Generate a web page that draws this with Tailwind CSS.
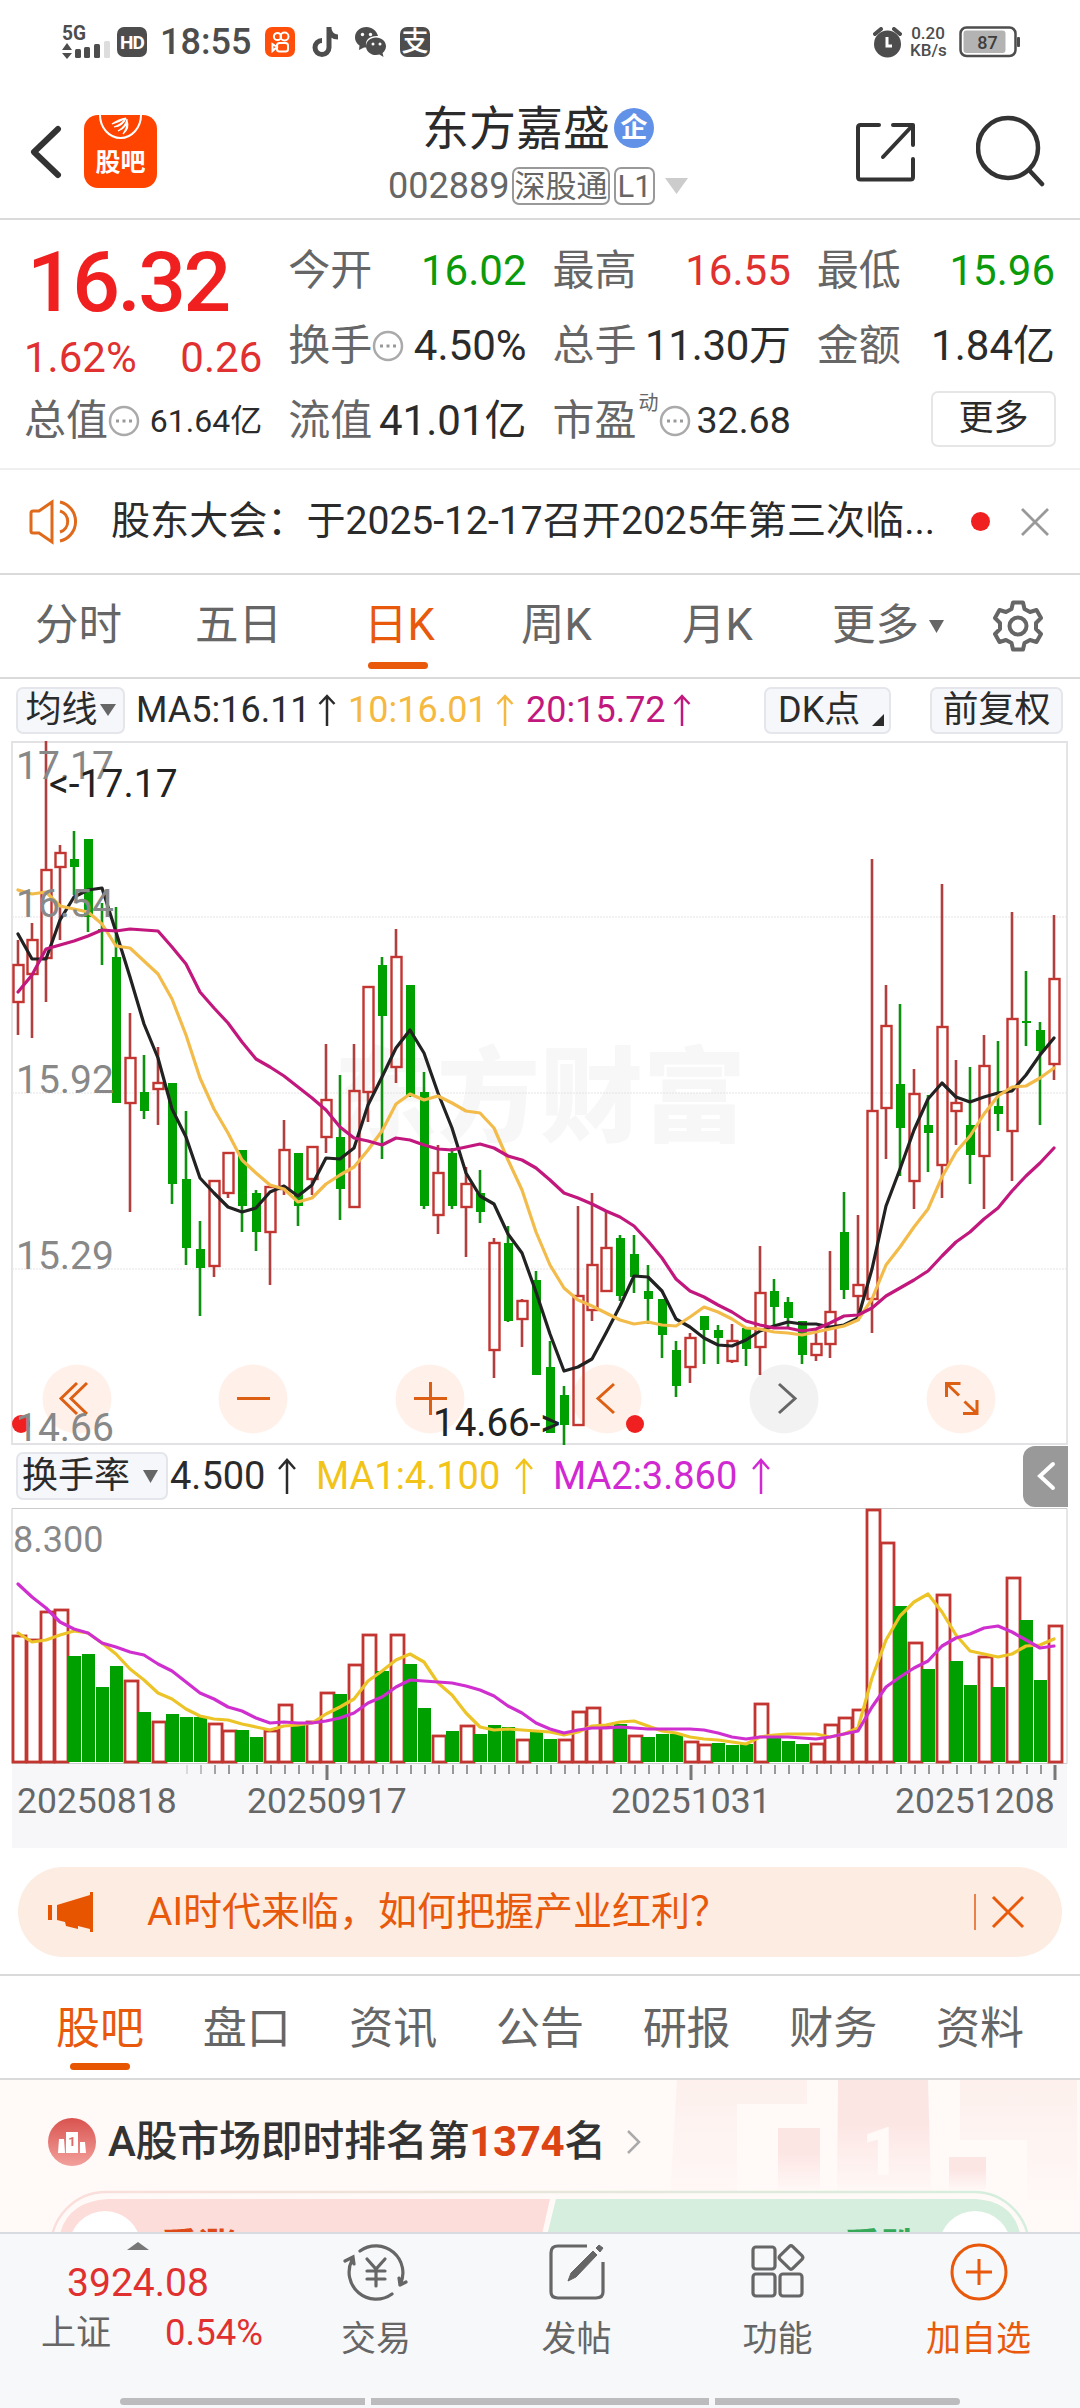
<!DOCTYPE html>
<html lang="zh-CN">
  <head>
    <meta charset="UTF-8" />
    <meta name="viewport" content="width=device-width, initial-scale=1.0" />
    <title>东方嘉盛 002889</title>
    <script src="https://cdn.jsdelivr.net/npm/@tailwindcss/browser@4"></script>
  </head>
  <body class="bg-white w-[1080px] h-[2408px] overflow-hidden font-[Roboto,'Noto_Sans_CJK_SC',sans-serif] text-[#2b2b2b] leading-none whitespace-nowrap">
    <!-- status bar -->
    <div class="h-[84px] flex items-center justify-between pl-[62px] pr-[60px]">
      <div class="flex items-center">
        <svg class="w-[48px] h-[36px] overflow-visible" viewBox="0 0 48 36" fill="#4d4d4d">
          <text x="0" y="15.500" font-size="21" font-weight="700" textLength="24" lengthAdjust="spacingAndGlyphs">5G</text>
          <path d="M5 19l5 7H0zM5 35l5-6H0z" />
          <rect x="13" y="25" width="6" height="9" rx="1.5" />
          <rect x="22" y="23" width="6" height="11" rx="1.5" />
          <rect x="32" y="20" width="6" height="14" rx="1.5" />
          <rect x="42" y="17" width="6" height="17" rx="1.5" fill="#ddd" />
        </svg>
        <div class="ml-[7px] w-[30px] h-[30px] rounded-[7px] bg-[#4d4d4d] text-white text-[19px] font-bold flex items-center justify-center tracking-tighter">HD</div>
        <div class="ml-[13px] w-[105px] text-[36px] font-medium text-[#4d4d4d]">18:55</div>
        <svg class="w-[30px] h-[30px]" viewBox="0 0 30 30" fill="none" stroke="#fff" stroke-width="2">
          <rect width="30" height="30" rx="7" fill="#ff4f0a" stroke="none" />
          <circle cx="12.5" cy="9.500" r="3.600" />
          <circle cx="19.500" cy="9.500" r="4" />
          <rect x="12" y="16" width="11" height="8.500" rx="2.500" />
          <path d="M12 20l-4.500-3v7z" />
        </svg>
        <svg class="ml-[17px] w-[27px] h-[30px]" viewBox="0 0 27 30">
          <path d="M17 0v20.500a7 7 0 1 1-7-7M17 2c1 5 4 8 9 8" fill="none" stroke="#4d4d4d" stroke-width="5" />
        </svg>
        <svg class="ml-[16px] w-[31px] h-[30px]" viewBox="0 0 31 30" fill="#4d4d4d">
          <path d="M11.500 0C5 0 0 4.500 0 10.500c0 3.500 1.800 6 4.500 8L4 23l5-2.500h2.500C9 13 15 8.500 23 9 21.500 3.500 17 0 11.500 0z" />
          <path d="M21 10.500c-5.500 0-10 3.700-10 8.700s4.500 8.800 10 8.800c1.200 0 2.400-.2 3.500-.5L28.500 30l-1-4c2-1.600 3.500-4 3.500-6.800 0-5-4.500-8.700-10-8.700z" />
          <g fill="#fff"><circle cx="7.500" cy="7.500" r="1.700" /><circle cx="15.500" cy="7.500" r="1.700" /><circle cx="18" cy="17" r="1.500" /><circle cx="25" cy="17" r="1.500" /></g>
        </svg>
        <div class="ml-[14px] w-[30px] h-[30px] rounded-[7px] bg-[#4d4d4d] text-white text-[27px] font-medium flex items-center justify-center">支</div>
      </div>
      <div class="flex items-center">
        <svg class="w-[29px] h-[31px]" viewBox="0 0 29 31">
          <circle cx="14.500" cy="17" r="13.500" fill="#4d4d4d" />
          <path d="M2 7l6-5M27 7l-6-5" stroke="#4d4d4d" stroke-width="4" stroke-linecap="round" />
          <path d="M14 10v9h5" fill="none" stroke="#fff" stroke-width="3" />
        </svg>
        <div class="ml-[8px] w-[36px] text-[17px] leading-[17px] text-center text-[#4d4d4d] font-medium">0.20<br />KB/s</div>
        <svg class="ml-[13px] w-[61px] h-[32px]" viewBox="0 0 61 32">
          <rect x="1.500" y="1.500" width="55" height="28.500" rx="6" fill="#fff" stroke="#4d4d4d" stroke-width="2.500" />
          <rect x="4.500" y="4.500" width="42" height="22.500" rx="3" fill="#b3b3b3" />
          <rect x="58" y="11" width="3" height="10" rx="1" fill="#4d4d4d" />
          <text x="28.500" y="22.500" font-size="18" font-weight="500" text-anchor="middle" fill="#3d3d3d">87</text>
        </svg>
      </div>
    </div>

    <!-- header -->
    <header class="h-[136px] border-b-2 border-[#dadada] flex justify-between pl-[30px] pr-[34px]">
      <div class="w-[330px] flex pt-[31px]">
        <svg class="mt-[10px] w-[32px] h-[54px]" viewBox="0 0 32 54">
          <path d="M28 4L4 27l24 23" fill="none" stroke="#333" stroke-width="6" stroke-linecap="round" stroke-linejoin="round" />
        </svg>
        <svg class="ml-[22px] w-[73px] h-[73px]" viewBox="0 0 73 73">
          <rect width="73" height="73" rx="14" fill="#ff4400" />
          <path d="M16 0a20.500 23 0 0 0 41 0" fill="none" stroke="#fff" stroke-width="2" />
          <path d="M28 9q7-5 14-6-7 4-14 6zM30 12q8-3 12-9-3 8-12 9zM34 16q8-5 9-12 1 8-9 12zM39 19q5-7 4-13 3 7-4 13z" fill="#fff" stroke="#fff" stroke-width="1.200" />
          <text x="36.500" y="56" font-size="25" font-weight="700" text-anchor="middle" fill="#fff">股吧</text>
        </svg>
      </div>
      <div class="flex flex-col items-center pt-[20px]">
        <div class="flex items-center h-[48px]">
          <h1 class="text-[47px]">东方嘉盛</h1>
          <div class="ml-[4px] w-[40px] h-[40px] rounded-full bg-[#6292e8] text-white text-[27px] font-bold flex items-center justify-center">企</div>
        </div>
        <div class="mt-[13px] h-[42px] flex items-center text-[#666] text-[36px]">
          <span class="w-[124px]">002889</span>
          <span class="w-[98px] h-[38px] border-2 border-[#999] rounded-[7px] text-[31px] flex items-center justify-center">深股通</span>
          <span class="ml-[4px] w-[41px] h-[38px] border-2 border-[#999] rounded-[7px] text-[31px] flex items-center justify-center">L1</span>
          <svg class="ml-[10px] w-[23px] h-[16px]" viewBox="0 0 23 16"><path d="M0 0h23L11.500 16z" fill="#ccc" /></svg>
        </div>
      </div>
      <div class="w-[330px] flex justify-end pt-[31px]">
        <svg class="mt-[7px] w-[60px] h-[60px]" viewBox="0 0 60 60" fill="none" stroke="#333" stroke-width="4" stroke-linejoin="round" stroke-linecap="round">
          <path d="M23 3H4.500q-2.500 0-2.500 2.500V55q0 2.500 2.500 2.500h50q2.500 0 2.500-2.500V37M37 3h20v20M57 3L27 35" />
        </svg>
        <svg class="ml-[60px] w-[70px] h-[72px]" viewBox="0 0 70 72" fill="none" stroke="#333" stroke-width="4.500" stroke-linecap="round">
          <circle cx="32" cy="33" r="30" /><path d="M53 55l13 14" />
        </svg>
      </div>
    </header>

    <!-- quote -->
    <section class="h-[250px] border-b-2 border-[#efefef] pt-[13px] pl-[24px] pr-[25px] grid grid-cols-4 gap-x-[26px] auto-rows-[75px] content-start text-[42px]">
      <div class="row-span-2">
        <div class="h-[100px] flex items-center text-[84px] font-medium text-[#f02020] tracking-[-2.500px] pl-[3px]">16.32</div>
        <div class="h-[50px] flex items-center justify-between text-[#e03030]"><span>1.62%</span><span>0.26</span></div>
      </div>
      <div class="flex items-center justify-between"><span class="text-[#666]">今开</span><span class="text-[#0a9a0a]">16.02</span></div>
      <div class="flex items-center justify-between"><span class="text-[#666]">最高</span><span class="text-[#e03030]">16.55</span></div>
      <div class="flex items-center justify-between"><span class="text-[#666]">最低</span><span class="text-[#0a9a0a]">15.96</span></div>
      <div class="flex items-center justify-between">
        <span class="text-[#666] flex items-center">换手<svg class="w-[32px] h-[32px]" viewBox="0 0 32 32"><circle cx="16" cy="16" r="14" fill="none" stroke="#aaa" stroke-width="2.500" /><path d="M8 16h3M14.500 16h3M21 16h3" stroke="#999" stroke-width="3" /></svg></span>
        <span>4.50%</span>
      </div>
      <div class="flex items-center justify-between"><span class="text-[#666]">总手</span><span class="tracking-[-0.300px]">11.30万</span></div>
      <div class="flex items-center justify-between"><span class="text-[#666]">金额</span><span>1.84亿</span></div>
      <div class="flex items-center justify-between">
        <span class="text-[#666] flex items-center">总值<svg class="w-[32px] h-[32px]" viewBox="0 0 32 32"><circle cx="16" cy="16" r="14" fill="none" stroke="#aaa" stroke-width="2.500" /><path d="M8 16h3M14.500 16h3M21 16h3" stroke="#999" stroke-width="3" /></svg></span>
        <span class="text-[32px]">61.64亿</span>
      </div>
      <div class="flex items-center justify-between"><span class="text-[#666]">流值</span><span>41.01亿</span></div>
      <div class="flex items-center justify-between">
        <span class="text-[#666] flex items-center">市盈<sup class="text-[20px] -top-[18px] w-[20px] ml-[2px]">动</sup><svg class="w-[32px] h-[32px]" viewBox="0 0 32 32"><circle cx="16" cy="16" r="14" fill="none" stroke="#aaa" stroke-width="2.500" /><path d="M8 16h3M14.500 16h3M21 16h3" stroke="#999" stroke-width="3" /></svg></span>
        <span class="text-[37.500px]">32.68</span>
      </div>
      <div class="flex items-center justify-end"><button class="w-[125px] h-[56px] border-2 border-[#e6e6e6] rounded-[7px] text-[35px] -mr-[1px] -mt-[4px]">更多</button></div>
    </section>

    <!-- notice -->
    <section class="h-[105px] border-b-2 border-[#dadada] flex items-center pl-[29px] pr-[30px]">
      <svg class="w-[52px] h-[46px]" viewBox="0 0 52 46" fill="none" stroke="#e06a1c" stroke-width="3">
        <path d="M23 3L10 12H4q-2 0-2 2v18q0 2 2 2h6l13 9zM31 3a20 20 0 0 1 0 39M31 12a11 11 0 0 1 0 21" />
      </svg>
      <p class="ml-[30px] w-[849px] text-[39.100px]">股东大会：于2025-12-17召开2025年第三次临...</p>
      <span class="ml-[11px] w-[19px] h-[19px] rounded-full bg-[#f02020]"></span>
      <svg class="ml-[30px] w-[30px] h-[30px]" viewBox="0 0 30 30"><path d="M2 2l26 26M28 2L2 28" stroke="#999" stroke-width="2.800" /></svg>
    </section>

    <!-- period tabs -->
    <nav class="h-[104px] border-b-2 border-[#dadada] flex items-center text-[43.500px] text-[#666] pl-[35px]">
      <span class="w-[160px]">分时</span>
      <span class="w-[169px]">五日</span>
      <span class="relative w-[157px] text-[#e8590c]">日K<i class="absolute left-[4px] -bottom-[21px] w-[60px] h-[7px] rounded-full bg-[#e8590c]"></i></span>
      <span class="w-[161px]">周K</span>
      <span class="w-[150px]">月K</span>
      <span class="w-[87px]">更多</span>
      <svg class="ml-[10px] w-[15px] h-[13px]" viewBox="0 0 15 13"><path d="M0 0h15L7.500 13z" fill="#666" /></svg>
      <svg class="ml-[48px] w-[52px] h-[52px]" viewBox="0 0 52 52" fill="none" stroke="#666" stroke-width="4" stroke-linejoin="round">
        <path d="M21 2.500h10l1.500 6.500 5.500 3 6.500-2 4.500 8-5 5v6l5 5-4.500 8-6.500-2-5.500 3-1.500 6.500H21L19.500 43l-5.500-3-6.500 2L3 34l5-5v-6l-5-5 4.500-8 6.500 2 5.500-3z" />
        <circle cx="26" cy="26" r="8.500" />
      </svg>
    </nav>

    <!-- moving averages bar -->
    <div class="h-[62px] flex items-center pl-[16px] text-[36px]">
      <button class="w-[109px] h-[47px] border-2 border-[#e4e6ec] rounded-[7px] bg-[#f6f7fa] flex items-center justify-center">均线<svg class="ml-[2px] w-[16px] h-[12px]" viewBox="0 0 16 12"><path d="M0 0h16L8 12z" fill="#666" /></svg></button>
      <span class="ml-[11px] w-[182px]">MA5:16.11</span>
      <svg class="w-[18px] h-[32px]" viewBox="0 0 18 32"><path d="M9 32V2M1.500 10L9 2l7.500 8" fill="none" stroke="#2b2b2b" stroke-width="2.500" /></svg>
      <span class="ml-[12px] w-[148px] text-[#f5b942]">10:16.01</span>
      <svg class="w-[18px] h-[32px]" viewBox="0 0 18 32"><path d="M9 32V2M1.500 10L9 2l7.500 8" fill="none" stroke="#f5b942" stroke-width="2.500" /></svg>
      <span class="ml-[12px] w-[147px] text-[#c2187e]">20:15.72</span>
      <svg class="w-[18px] h-[32px]" viewBox="0 0 18 32"><path d="M9 32V2M1.500 10L9 2l7.500 8" fill="none" stroke="#c2187e" stroke-width="2.500" /></svg>
      <button class="ml-[73px] w-[127px] h-[47px] border-2 border-[#e4e6ec] rounded-[7px] bg-[#f6f7fa] flex items-center pl-[12px]">DK点<svg class="ml-[12px] mt-[20px] w-[12px] h-[12px]" viewBox="0 0 12 12"><path d="M12 0v12H0z" fill="#2b2b2b" /></svg></button>
      <button class="ml-[39px] w-[133px] h-[47px] border-2 border-[#e4e6ec] rounded-[7px] bg-[#f6f7fa] flex items-center justify-center">前复权</button>
    </div>

    <!-- K line chart -->
    <svg id="kline" class="block w-[1080px] h-[705px]" viewBox="0 741 1080 705"></svg>

    <!-- turnover bar -->
    <div class="h-[62px] -mt-px mb-px flex items-center pl-[16px] text-[38px]">
      <button class="w-[152px] h-[48px] border-2 border-[#e4e6ec] rounded-[7px] bg-[#f6f7fa] flex items-center pl-[4px] text-[36px]">换手率<svg class="ml-[13px] w-[15px] h-[13px]" viewBox="0 0 15 13"><path d="M0 0h15L7.500 13z" fill="#666" /></svg></button>
      <span class="ml-[2px] w-[108px]">4.500</span>
      <svg class="w-[18px] h-[36px]" viewBox="0 0 18 36"><path d="M9 36V2M1 11L9 2l8 9" fill="none" stroke="#2b2b2b" stroke-width="2.500" /></svg>
      <span class="ml-[20px] w-[199px] text-[#f2c318]">MA1:4.100</span>
      <svg class="w-[18px] h-[36px]" viewBox="0 0 18 36"><path d="M9 36V2M1 11L9 2l8 9" fill="none" stroke="#f2c318" stroke-width="2.500" /></svg>
      <span class="ml-[20px] w-[199px] text-[#d129d1]">MA2:3.860</span>
      <svg class="w-[18px] h-[36px]" viewBox="0 0 18 36"><path d="M9 36V2M1 11L9 2l8 9" fill="none" stroke="#d129d1" stroke-width="2.500" /></svg>
      <button class="ml-auto mr-[12px] w-[45px] h-[61px] rounded-l-[12px] bg-[#999] flex items-center justify-center">
        <svg class="w-[20px] h-[30px]" viewBox="0 0 20 30"><path d="M17 3L4 15l13 12" fill="none" stroke="#fff" stroke-width="4" stroke-linecap="round" /></svg>
      </button>
    </div>

    <!-- turnover chart -->
    <svg id="turnover" class="block w-[1080px] h-[340px]" viewBox="0 1508 1080 340"></svg>

    <!-- promo banner -->
    <div class="mt-[19px] mx-[18px] h-[90px] rounded-[45px] bg-[#fcece2] flex items-center pl-[30px] pr-[37px] text-[#e8590c]">
      <svg class="w-[46px] h-[40px]" viewBox="0 0 46 40" fill="#e85500">
        <path d="M0 13h4v15H0zM9 13l33-10v-3h3v40h-3v-3l-12-3v3L18 34l-1-4-8-2z" />
      </svg>
      <p class="ml-[53px] grow text-[39px]">AI时代来临，如何把握产业红利？</p>
      <i class="w-[2px] h-[36px] bg-[#e8824a]"></i>
      <svg class="ml-[15px] w-[34px] h-[34px]" viewBox="0 0 34 34"><path d="M2 2l30 30M32 2L2 32" stroke="#e8590c" stroke-width="3" /></svg>
    </div>

    <!-- section tabs -->
    <nav class="mt-[17px] h-[106px] border-y-2 border-[#dadada] flex items-center justify-between px-[56px] pt-[3px] text-[44px] text-[#666]">
      <span class="relative text-[#e8590c]">股吧<i class="absolute left-[14px] -bottom-[19px] w-[60px] h-[7px] rounded-full bg-[#e85500]"></i></span>
      <span>盘口</span><span>资讯</span><span>公告</span><span>研报</span><span>财务</span><span>资料</span>
    </nav>

    <!-- ranking panel, cut off by the bottom bar -->
    <section class="relative h-[152px] overflow-hidden bg-[#fffaf8]">
      <svg class="absolute inset-0 w-[1080px] h-[152px]" viewBox="0 2080 1080 152">
        <defs>
          <linearGradient id="fade" x1="0" y1="0" x2="0" y2="1"><stop offset="0" stop-color="#fdf0ed" /><stop offset="1" stop-color="#fdf0ed" stop-opacity="0.200" /></linearGradient>
          <linearGradient id="fade2" x1="0" y1="0" x2="0" y2="1"><stop offset="0.400" stop-color="#fce6e4" /><stop offset="1" stop-color="#fce6e4" stop-opacity="0.100" /></linearGradient>
          <linearGradient id="rim"><stop offset="0" stop-color="#fbdedb" /><stop offset="1" stop-color="#d5eedd" /></linearGradient>
        </defs>
        <path d="M677 2080h130v24h-70v92h-67zM960 2080h117v120h-50v-60h-67z" fill="url(#fade)" />
        <path d="M778 2128h42v62h-42z" fill="url(#fade2)" />
        <path d="M838 2079h90l3 112h-94z" fill="url(#fade2)" />
        <path d="M949 2157h37v33h-37z" fill="url(#fade2)" />
        <text x="881" y="2175" font-size="66" font-weight="900" text-anchor="middle" fill="#fff9f7">1</text>
        <rect x="51" y="2192" width="978" height="110" rx="55" fill="#fffaf8" stroke="url(#rim)" stroke-width="2.500" />
        <path d="M550 2199H108q-50 3-50 53h480z" fill="#fdddd9" />
        <path d="M556 2199h420q46 3 46 53H543z" fill="#d5eedd" />
        <circle cx="105" cy="2247" r="36" fill="#fff" /><circle cx="975" cy="2247" r="36" fill="#fff" />
        <text x="160" y="2260" font-size="38" font-weight="700" fill="#dd4a18">看涨</text>
        <text x="843" y="2260" font-size="38" font-weight="700" fill="#35a85a">看跌</text>
      </svg>
      <div class="relative flex items-center pt-[38px] pl-[48px]">
        <svg class="w-[48px] h-[48px]" viewBox="0 0 48 48">
          <defs><linearGradient id="badge" x1="0" y1="0" x2="0" y2="1"><stop offset="0" stop-color="#d9534f" /><stop offset="1" stop-color="#f2a09c" /></linearGradient></defs>
          <circle cx="24" cy="24" r="24" fill="url(#badge)" />
          <path d="M11 21h5l1 14h-7zM18 14h12v21H18zM32 24h5l1 11h-6z" fill="#fff" />
          <text x="24" y="28" font-size="13" font-weight="700" text-anchor="middle" fill="#e06a66">1</text>
        </svg>
        <h2 class="ml-[12px] text-[42px] font-medium text-[#333] tracking-[-0.300px]">A股市场即时排名第<b class="text-[#dd4414]">1374</b>名</h2>
        <svg class="ml-[20px] w-[16px] h-[26px]" viewBox="0 0 16 26"><path d="M2 2l11 11L2 24" fill="none" stroke="#aaa" stroke-width="2.500" /></svg>
      </div>
    </section>

    <!-- bottom bar -->
    <footer class="h-[176px] border-t-2 border-[#d8dbe0] bg-[#f7f8fa] text-[35px] text-[#666]">
      <div class="h-[164px] flex">
        <div class="w-[276px] flex flex-col items-center pt-[8px] text-[#e03030]">
          <svg class="w-[22px] h-[8px]" viewBox="0 0 22 8"><path d="M11 0l11 8H0z" fill="#777" /></svg>
          <div class="mt-[14px] text-[39px]">3924.08</div>
          <div class="mt-[12px] w-[276px] pl-[41px] pr-[13px] flex justify-between items-center"><span class="text-[#666]">上证</span><span class="text-[36.500px]">0.54%</span></div>
        </div>
        <div class="w-[200px] flex flex-col items-center pt-[8px]">
          <svg class="w-[66px] h-[60px]" viewBox="0 0 66 60" fill="none" stroke="#666" stroke-width="3.200" stroke-linecap="round">
            <path d="M17 9A27 27 0 0 1 57 43M49 52A27 27 0 0 1 9 18M2 19l8-4 1 7M57 43l6-3M57 43l-1-7" />
            <path d="M24 17l9 10 9-10M33 27v17M24 29h18M24 37h18" />
          </svg>
          <span class="mt-[20px]">交易</span>
        </div>
        <div class="w-[201px] flex flex-col items-center pt-[8px]">
          <svg class="w-[56px] h-[60px]" viewBox="0 0 56 60" fill="none" stroke="#666" stroke-width="3.200">
            <path d="M38 4H9q-7 0-7 7v39q0 6 7 6h38q7 0 7-6V20" />
            <path d="M19 39l3-8L44 9l4 4-21 22zM47 6l3-3 4 3-3 4z" fill="#666" stroke-width="1" />
          </svg>
          <span class="mt-[20px]">发帖</span>
        </div>
        <div class="w-[201px] flex flex-col items-center pt-[8px]">
          <svg class="w-[54px] h-[60px]" viewBox="0 0 54 60" fill="none" stroke="#666" stroke-width="3.200" stroke-linejoin="round">
            <rect x="2" y="5" width="22" height="22" rx="3" />
            <rect x="2" y="32" width="22" height="22" rx="3" />
            <rect x="29" y="32" width="22" height="22" rx="3" />
            <rect x="31" y="6.500" width="18" height="18" rx="2.500" transform="rotate(45 40 15.500)" />
          </svg>
          <span class="mt-[20px]">功能</span>
        </div>
        <div class="w-[201px] flex flex-col items-center pt-[8px] text-[#e8590c]">
          <svg class="w-[60px] h-[60px]" viewBox="0 0 60 60" fill="none" stroke="#e8590c" stroke-width="3"><circle cx="30" cy="30" r="27" /><path d="M17 30h26M30 17v26" /></svg>
          <span class="mt-[20px]">加自选</span>
        </div>
      </div>
      <div class="h-[7px] flex gap-[6px] px-[120px]">
        <i class="w-[245px] rounded-l-full bg-[#bcbcbe]"></i>
        <i class="w-[338px] bg-[#bcbcbe]"></i>
        <i class="w-[245px] rounded-r-full bg-[#bcbcbe]"></i>
      </div>
    </footer>
  </body>
  <script>
    const RED = "#c23531";
    const GREEN = "#00a000";
    const STEP = 14;
    const LEFT = 18;
    const xAt = (i) => LEFT + i * STEP;

    // one row per day: colour, high, body top, body bottom, low
    const candles = [
      ["r",940,965,1002,1035],["r",923,940,974,1038],["r",741,870,958,1002],["r",845,853,867,940],["g",831,859,867,895],
      ["g",839,839,917,932],["g",903,929,931,965],["g",907,957,1103,1103],["r",1013,1058,1103,1212],["g",1055,1092,1111,1119],
      ["r",1047,1083,1089,1125],["g",1083,1083,1184,1204],["g",1111,1179,1248,1265],["g",1221,1249,1268,1316],["r",1181,1181,1266,1277],
      ["r",1153,1153,1193,1198],["g",1150,1150,1206,1232],["g",1190,1193,1232,1251],["r",1187,1187,1232,1285],["r",1120,1150,1189,1195],
      ["g",1153,1153,1206,1226],["r",1147,1147,1179,1195],["r",1044,1100,1137,1153],["g",1075,1137,1189,1220],["r",1044,1091,1207,1207],
      ["r",987,987,1092,1122],["g",957,965,1016,1159],["r",929,957,1067,1083],["g",985,985,1095,1097],["g",1072,1092,1206,1209],
      ["r",1145,1173,1215,1234],["g",1148,1153,1206,1209],["r",1167,1184,1207,1257],["g",1170,1193,1212,1223],["r",1238,1243,1350,1378],
      ["g",1226,1243,1321,1322],["r",1299,1301,1319,1347],["g",1271,1280,1375,1375],["g",1341,1367,1433,1433],["g",1386,1395,1425,1445],
      ["r",1206,1296,1425,1425],["r",1193,1265,1310,1321],["r",1212,1248,1291,1291],["g",1235,1238,1296,1301],["g",1235,1254,1277,1293],
      ["g",1265,1291,1299,1324],["g",1299,1299,1335,1358],["g",1341,1350,1386,1397],["r",1333,1338,1367,1383],["g",1316,1316,1330,1364],
      ["g",1325,1330,1338,1364],["r",1324,1341,1361,1363],["g",1328,1328,1349,1366],["r",1246,1293,1347,1375],["g",1279,1291,1307,1326],
      ["g",1297,1302,1318,1327],["g",1321,1321,1355,1364],["r",1330,1344,1355,1361],["r",1251,1312,1344,1358],["g",1192,1232,1290,1299],
      ["r",1215,1285,1296,1321],["r",859,1111,1299,1333],["r",985,1026,1108,1159],["g",1004,1084,1128,1176],["r",1069,1094,1181,1209],
      ["g",1095,1125,1133,1172],["r",884,1027,1165,1198],["r",1060,1103,1111,1145],["g",1067,1125,1155,1184],["r",1035,1066,1156,1209],
      ["g",1041,1106,1114,1131],["r",912,1019,1131,1181],["g",971,1021,1023,1046],["g",1022,1030,1051,1125],["r",915,979,1064,1080],
    ];
    const ma5 = [934,959,959,920,897,890,888,932,977,1024,1058,1109,1137,1178,1193,1207,1212,1208,1192,1186,1196,1185,1158,1159,1148,1105,1077,1048,1030,1053,1093,1128,1173,1196,1204,1234,1253,1292,1334,1371,1367,1359,1333,1306,1276,1277,1291,1319,1327,1338,1345,1346,1340,1331,1326,1322,1324,1324,1327,1325,1318,1269,1206,1169,1130,1099,1083,1097,1102,1097,1093,1091,1075,1055,1038];
    const ma10 = [890,894,892,906,909,912,924,946,948,961,974,999,1035,1078,1109,1133,1160,1173,1185,1189,1202,1198,1184,1175,1167,1150,1131,1104,1094,1100,1096,1103,1111,1113,1128,1160,1190,1232,1265,1288,1300,1306,1313,1320,1324,1322,1325,1326,1317,1307,1312,1319,1328,1329,1332,1333,1335,1332,1329,1326,1320,1299,1265,1247,1227,1209,1177,1152,1136,1114,1096,1087,1086,1078,1068];
    const ma20 = [992,975,949,945,941,936,930,931,929,930,931,947,964,992,1008,1023,1042,1059,1067,1076,1087,1098,1110,1127,1138,1141,1145,1138,1140,1145,1149,1150,1147,1144,1148,1156,1160,1168,1180,1193,1198,1204,1211,1217,1226,1241,1258,1279,1291,1297,1305,1312,1321,1325,1328,1328,1331,1329,1323,1316,1315,1308,1296,1288,1280,1271,1256,1242,1232,1219,1208,1191,1176,1163,1148];

    // turnover bars: colour per day, then bar top
    const barColor = "rrrrggggrgrgggrrggrrgrrgrrgrggrgrgggrggrrrrgrgggrrgggrgggrrrrrrgrgrggrgrggr";
    const barTop = [1635,1639,1611,1609,1656,1654,1687,1666,1680,1712,1721,1714,1717,1717,1723,1730,1730,1737,1730,1704,1725,1721,1692,1694,1664,1634,1671,1634,1664,1708,1735,1731,1725,1734,1725,1727,1739,1730,1739,1739,1711,1707,1726,1724,1735,1737,1734,1734,1741,1744,1743,1745,1744,1703,1738,1741,1744,1743,1724,1717,1709,1509,1542,1606,1642,1669,1594,1661,1685,1656,1687,1577,1620,1680,1625];
    const volMa1 = [1633,1642,1640,1635,1631,1633,1643,1654,1669,1680,1693,1699,1709,1716,1719,1720,1724,1727,1730,1726,1725,1723,1714,1707,1699,1681,1671,1660,1654,1662,1683,1695,1713,1727,1730,1729,1730,1731,1732,1735,1732,1726,1725,1722,1721,1726,1731,1733,1737,1739,1740,1742,1744,1737,1735,1734,1734,1734,1737,1734,1728,1678,1640,1616,1602,1594,1612,1635,1651,1654,1657,1654,1646,1645,1639];
    const volMa2 = [1584,1597,1608,1622,1629,1633,1643,1647,1652,1655,1664,1671,1682,1693,1699,1707,1711,1718,1723,1722,1723,1723,1721,1718,1713,1703,1697,1687,1680,1681,1682,1683,1686,1690,1696,1706,1713,1723,1729,1733,1730,1728,1728,1727,1728,1729,1729,1729,1729,1730,1733,1737,1739,1737,1737,1737,1738,1739,1737,1734,1731,1707,1687,1677,1668,1661,1646,1638,1634,1628,1626,1632,1640,1648,1646];

    const line = (values, color) =>
      `<polyline points="${values.map((y, i) => xAt(i) + "," + y).join(" ")}" fill="none" stroke="${color}" stroke-width="3.200" stroke-linejoin="round" stroke-linecap="round"/>`;

    const drawKline = () => {
      let s = `<text x="334" y="1134" font-size="103" font-weight="900" fill="#f7f7f7">东方财富</text>`;
      [917, 1093, 1269].forEach((y) => {
        s += `<path d="M12 ${y}H1067" stroke="#e4e4e4" stroke-dasharray="2 1"/>`;
      });
      s += `<path d="M12 742H1067V1444H12z" fill="none" stroke="#e2e2e4" stroke-width="1.800"/>`;
      candles.forEach(([c, high, top, bottom, low], i) => {
        const x = xAt(i);
        if (c === "r") {
          s += `<path d="M${x} ${high}V${top}M${x} ${bottom}V${low}" stroke="#b04040" stroke-width="2.600"/>`;
          s += `<rect x="${x - 4.500}" y="${top}" width="10" height="${bottom - top}" fill="none" stroke="${RED}" stroke-width="2.400"/>`;
        } else {
          s += `<path d="M${x} ${high}V${low}" stroke="#109010" stroke-width="2.600"/>`;
          s += `<rect x="${x - 4}" y="${top}" width="9" height="${Math.max(bottom - top, 1.5)}" fill="${GREEN}"/>`;
        }
      });
      s += line(ma5, "#222") + line(ma10, "#f2bb4a") + line(ma20, "#c2187e");

      // floating controls
      [77, 253, 430, 607, 784, 961].forEach((x) => {
        s += `<circle cx="${x}" cy="1399" r="34.500" fill="${x === 784 ? "#000" : "#ff6010"}" fill-opacity="${x === 784 ? 0.05 : 0.09}"/>`;
      });
      s += `<circle cx="21" cy="1424" r="9" fill="#f02020"/><circle cx="635" cy="1424" r="9" fill="#f02020"/>`;
      s += `<g fill="none" stroke="#dd5f14" stroke-width="3">
        <path d="M77 1383l-16 15.500 16 15.500M87 1383l-16 15.500 16 15.500"/>
        <path d="M237 1398.500h33M414 1398.500h33M430.500 1382v33"/>
        <path d="M614 1384l-16 14.500 16 14.500"/>
        <path d="M779 1384l16 14.500-16 14.500" stroke="#666"/>
        <path d="M946.500 1397v-13.500h14M947 1384l12 11.500M977 1400v13.500h-14M976.500 1413l-12-11.500"/>
      </g>`;
      s += `<g font-size="39" fill="#888">
        <text x="16" y="779">17.17</text><text x="16" y="917">16.54</text><text x="16" y="1093">15.92</text>
        <text x="16" y="1269">15.29</text><text x="16" y="1441">14.66</text>
      </g>
      <g font-size="39" fill="#222"><text x="49" y="797">&lt;-17.17</text><text x="433" y="1436" font-size="38.500">14.66-&gt;</text></g>`;
      document.getElementById("kline").innerHTML = s;
    };

    const drawTurnover = () => {
      let s = `<rect x="12" y="1764" width="1055" height="84" fill="#f7f7fa"/>`;
      s += `<path d="M12 1508.500H1067V1763.500H12z" fill="none" stroke="#ccc"/>`;
      barTop.forEach((y, i) => {
        const x = xAt(i);
        if (barColor[i] === "r") {
          s += `<rect x="${x - 5}" y="${y + 1}" width="13" height="${1761 - y}" fill="#fff" stroke="${RED}" stroke-width="2.800"/>`;
        } else {
          s += `<rect x="${x - 6}" y="${y}" width="13" height="${1762 - y}" fill="${GREEN}"/>`;
        }
      });
      s += line(volMa1, "#ecc428") + line(volMa2, "#cf2fcf");
      for (let i = 12; i < 75; i++) {
        const big = i === 22 || i === 48 || i === 74;
        s += `<path d="M${xAt(i) + 1} 1765v${big ? 15 : 9}" stroke="${big ? "#777" : "#999"}" stroke-width="${big ? 3 : 2}" stroke-opacity="${Math.min(1, (i - 11) * 0.3)}"/>`;
      }
      s += `<text x="13" y="1552" font-size="36" fill="#888">8.300</text>
      <g font-size="35.500" fill="#666">
        <text x="17" y="1813">20250818</text><text x="247" y="1813">20250917</text>
        <text x="611" y="1813">20251031</text><text x="895" y="1813">20251208</text>
      </g>`;
      document.getElementById("turnover").innerHTML = s;
    };

    drawKline();
    drawTurnover();
  </script>
</html>
